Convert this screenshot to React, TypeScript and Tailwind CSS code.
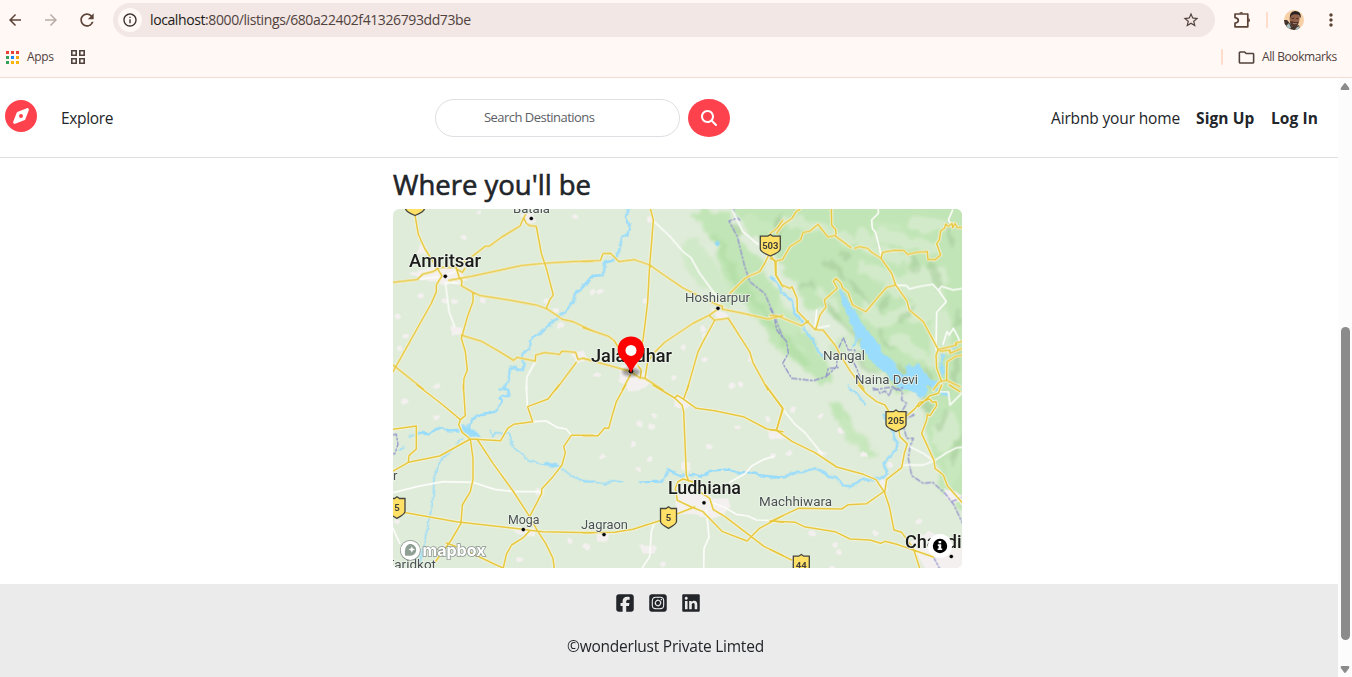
import React from "react";
import { MdArrowBack, MdArrowForward, MdRefresh, MdInfoOutline, MdStarOutline, MdMoreVert, MdOutlineFolder } from "react-icons/md";
import { FaCompass, FaMagnifyingGlass, FaSquareFacebook, FaSquareInstagram, FaLinkedin } from "react-icons/fa6";

type Tile = { x: number; y: number; roads: string[]; minor?: string[]; water?: string[]; streams?: string[]; border?: string[]; lakes?: string[] };

/* Geometry is drawn at three units per pixel, one tile for each section of the map. */
const tiles: Tile[] = [
  {
    x: 0, y: 0,
    roads: [
      "M66 30L76 88L95 130L117 165L147 212",
      "M0 232L72 224L90 207L120 200L140 187L190 187L240 152L278 123L290 123L325 97L382 62L390 42L398 28",
      "M392 38L400 55L410 62L430 64L445 145L460 190L481 270L470 285L460 310",
      "M168 226L235 214L385 182L460 174L540 170L600 168",
      "M190 190L198 215L207 228L205 242L240 262L262 272L350 285L430 300L462 312L490 330L508 343L540 350L600 378",
      "M240 262L240 290L225 330L205 400L217 440L223 495L213 520L211 555",
      "M147 212L130 240L130 260L115 295L0 500",
      "M0 480L92 553",
      "M205 390L268 410L320 440L362 466L372 457L427 468L428 450L455 443L500 448L507 438L548 442L555 463L570 460L600 467",
      "M550 472L488 555",
      "M190 192L208 202L216 190",
    ],
    minor: ["M157 232L168 320L185 365", "M427 470L402 515L400 555", "M157 215L120 217L80 222", "M157 232L200 235", "M160 210L185 200"],
    water: ["M600 212L570 245L545 270L540 290L515 322L490 340L470 360L445 380L412 402L408 430L392 445L388 465L395 478L390 495L370 493L365 485L350 492L348 520L335 545L320 552"],
  },
  {
    x: 570, y: 0,
    roads: [
      "M202 10L211 45L206 110L200 180L194 290L187 350L180 405L168 450",
      "M0 168L52 167L60 146L83 145L108 170L155 164L200 180L240 208L300 249L400 298L419 304L417 312L480 325L555 342L600 332",
      "M0 368L75 393L93 406L108 430L140 470",
      "M0 460L140 498L170 518L186 520L240 555",
      "M142 510L118 555",
      "M186 520L194 470L214 443L245 412L330 355L380 330L405 312",
      "M380 333L395 346L360 410L345 440L312 555",
      "M395 345L436 340L500 440L510 473L555 555",
      "M441 265L484 222L500 212L530 200L545 175L562 140",
      "M562 85L582 70L600 45",
      "M560 147L576 170L578 210L600 245",
      "M165 482L175 495L172 520",
    ],
    minor: ["M211 48L260 93L300 140L324 158L350 205L398 270L410 300", "M448 15L480 80L525 118"],
    water: ["M137 10L128 40L142 65L132 90L118 95L105 150L88 167L66 172L62 210L30 213L0 245"],
    border: ["M450 10L455 30L470 45L460 40L438 48L463 95L484 180L500 230L545 265L573 330L600 400"],
  },
  {
    x: 1131, y: 0,
    roads: [
      "M20 85L38 60L66 40L78 20L90 13",
      "M0 160L18 168L37 164L60 125L92 104L99 83L120 78L144 58L174 96L195 92L243 128",
      "M184 12L185 60L197 74L198 88",
      "M254 130L268 125L293 130L303 140L333 160L365 205L377 240L411 288L418 315L460 350L505 434",
      "M333 160L338 142L372 136L402 137L413 148L440 142L472 140L474 164L495 164L512 150L500 116L508 105L512 78L524 69L527 57L535 64L546 55L548 68L555 55L562 68L580 68",
      "M18 168L18 210L35 240L60 250L66 245L81 280L82 318L135 374L160 376L195 420L218 462L242 500L282 553",
      "M0 332L20 332L95 362L115 348",
      "M137 374L150 330L168 306L163 285L202 250L190 228L198 220L213 235L217 248L234 262L248 300L288 320L318 284L350 247L377 240",
      "M505 434L498 450L500 490L514 527L504 535L490 555",
      "M505 434L560 420L556 414L580 408",
      "M510 439L540 435L540 445L575 430",
      "M580 450L555 455L531 470L530 526L514 529",
      "M530 526L570 545",
    ],
    minor: [
      "M325 10L325 25L305 45L307 70L317 83L330 135L333 158",
      "M377 240L410 242L418 252L450 244L488 238L505 256L515 244L550 255L580 250",
      "M505 255L529 290L500 322L498 434",
      "M519 418L531 380L538 390L550 370L565 398L569 411",
      "M548 15L535 45L545 60",
      "M140 315L135 370L178 362",
    ],
    streams: ["M250 423L260 390L275 380L248 428", "M415 477L430 490L440 480L470 510L460 530L500 555"],
    water: ["M5 220L25 237L35 261L65 285L75 325L95 345L102 375L130 403L145 440L165 460", "M0 216L14 222"],
    lakes: [
      "M209 253L222 261L240 300L260 328L280 360L310 395L330 420L333 440L368 465L395 510L410 505L407 480L430 492L445 472L460 500L480 525L504 528L498 548L470 540L450 550L418 549L397 555L375 535L345 504L310 475L270 425L275 402L258 397L245 360L225 315L208 260Z",
      "M513 440L523 455L517 475L525 500L517 516L508 486L514 468Z",
      "M530 425L560 420L562 425L535 434Z",
    ],
    border: [
      "M0 310L12 330L20 375L50 410L55 445L38 475L65 520L130 527L168 515L175 490L205 488",
      "M168 515L200 485L203 435L220 398L235 435L255 435L245 460L260 490L282 553",
      "M310 555L370 545L380 555L405 545",
    ],
  },
  {
    x: 0, y: 540,
    roads: [
      "M72 0L150 60L202 104", "M211 0L217 92L202 104L197 120L208 143L232 162L323 167L344 130L362 118L419 110L404 65L465 42L498 0",
      "M232 162L240 220L240 283L232 320L208 360L204 415L175 465L120 540",
      "M232 162L140 213L46 232L48 212L70 192L70 123L0 133", "M46 232L0 258",
      "M252 162L300 235L360 318L410 395L433 437L458 475L480 520L484 553",
      "M30 382L190 410L390 433L410 436L450 440L600 443",
      "M410 395L446 325L446 312L480 275L507 240L517 203L512 185L535 151L600 151",
      "M160 474L205 490L310 540L340 553", "M330 553L340 508L356 480L392 457L410 437",
    ],
    minor: ["M400 0L403 65", "M419 110L460 108L492 127L520 132L535 151", "M0 323L75 304L150 290L240 292L305 313L362 320L440 320", "M0 430L20 475"],
    water: ["M335 10L347 16L345 33L327 33L320 40L328 50L308 80L250 90L225 120L238 145L255 155", "M75 143L108 145L144 126L165 136L195 135L225 142"],
    streams: ["M48 157L60 150L75 143", "M20 195L35 185", "M208 160L160 210L135 240L130 265L123 278L120 345L105 420L90 490L75 540", "M290 140L300 155L308 143L350 146L358 180L405 227L460 240L500 245L535 272L575 290L600 290"],
    lakes: ["M208 121L233 126L255 147L258 159L235 153L208 140Z", "M460 230L500 241L494 247L450 237Z"],
    border: ["M0 150L10 148L15 178L5 207L0 206"],
  },
  {
    x: 570, y: 540,
    roads: [
      "M128 0L100 50L88 90L77 130L65 129L45 152L0 152",
      "M210 0L275 39L297 60L302 80L310 270L317 288", "M275 39L283 31L298 40L340 70L395 77L481 95L552 132L600 140",
      "M317 0L303 39", "M548 0L600 72L580 136",
      "M0 443L95 442L150 433L230 407L335 366", "M330 290L300 282L285 290L277 310L283 346L325 366L360 380L417 439L492 468L528 431L600 392",
      "M330 290L335 310L380 340L391 374L425 394L543 484L600 512", "M568 408L600 412",
    ],
    minor: ["M440 292L485 267L505 244L540 224L570 215", "M380 350L425 367L460 388L495 393L520 405L600 408", "M370 375L378 457L363 490L362 553", "M215 410L205 440L200 515L175 553"],
    water: ["M170 292L235 290L257 253L285 272L318 272L340 270L350 275L388 256L440 254L475 266L500 260L525 270L600 278"],
    streams: ["M0 287L25 290L38 288L65 300L85 290L116 289"],
  },
  {
    x: 1131, y: 540,
    roads: [
      "M0 19L38 69L20 136L0 134", "M20 136L67 170L135 203L200 246L280 268L318 284L344 323L358 365L372 435L395 442L430 490L450 553",
      "M265 0L290 27L320 50L345 60L360 85", "M386 135L390 155L412 177L403 205L395 248L350 283L344 323",
      "M0 410L85 370L215 372L235 359L290 356L344 318", "M0 408L76 412L103 425L195 440L240 462L300 465L332 475L345 469L380 478L430 495L490 516",
      "M0 493L65 525", "M405 97L435 71L448 53L478 42L488 52L498 50L500 62L480 92L472 88L470 105L455 145L492 227L495 250L520 270L532 302L580 357",
      "M445 65L480 32L505 25L515 0", "M538 0L570 20",
    ],
    minor: ["M38 72L75 118L105 143L155 205", "M420 185L460 205L492 228L460 240L400 240", "M492 228L530 203L560 188L580 187", "M505 20L535 20L540 60L580 20"],
    water: ["M0 278L45 276L80 260L95 262L135 250L165 262L175 275L200 280L220 302L240 303L278 284L330 281L352 265L340 235L380 190L382 175L372 160L368 130", "M340 90L350 110"],
    streams: ["M236 0L240 12L260 23L285 60"],
    lakes: ["M397 0L410 14L440 25L450 40L470 30L475 15L465 0Z", "M495 0L510 15L530 22L535 35L512 28L490 8Z"],
    border: ["M310 10L325 15L330 25L345 18L358 32L365 10L380 10L397 20L395 45L410 55L395 80L435 90L405 100L402 130L410 160L430 160L420 185L415 220L425 272L460 295L488 292L525 325L552 360L580 420", "M545 350L580 335", "M490 515L510 553"],
  },
];

const forests = [
  "M890 20L1000 20L1025 66L1060 130L1120 200L1180 320L1280 430L1320 520L1290 540L1210 470L1130 410L1080 330L1015 270L980 200L965 120Z",
  "M990 -10L1740 -10L1740 930L1650 860L1610 700L1590 560L1510 560L1400 440L1320 330L1240 300L1180 200L1140 140L1080 80Z",
  "M1300 590L1350 600L1400 680L1450 730L1450 760L1400 740L1340 670Z",
];
const lightPatches = [
  [1340, 90, 60, 18, 25], [1470, 210, 90, 22, 20], [1570, 230, 100, 45, -12], [1300, 280, 55, 16, 50], [1520, 330, 80, 20, -25], [1600, 300, 50, 60, 30],
  [1370, 390, 16, 50, -35], [1550, 430, 65, 22, 30], [1490, 150, 65, 20, 25], [1240, 55, 75, 14, 10], [1640, 410, 30, 90, 10], [1660, 680, 35, 60, 15], [1420, 110, 25, 40, -30],
  [1600, 60, 60, 26, 0], [1500, 100, 70, 20, 10], [1440, 330, 22, 50, -35], [1580, 120, 60, 22, 10],
];
const ridges = [
  [1325, 190, 10, 50, -38], [1405, 260, 10, 60, -35], [1320, 320, 8, 40, -42], [1370, 380, 9, 60, -45], [1420, 475, 10, 50, -45],
  [1160, 60, 12, 30, 20], [1240, 240, 8, 36, 55], [1545, 330, 9, 40, 42], [1665, 90, 11, 44, -20], [1560, 180, 9, 26, -30], [1625, 210, 10, 46, -12],
  [1475, 300, 8, 30, 25], [1610, 515, 11, 30, -20], [1690, 490, 12, 55, 10], [1600, 600, 16, 30, -35], [1650, 650, 12, 35, 20], [1690, 730, 10, 50, 15],
  [1030, 70, 10, 24, -35], [1480, 400, 7, 40, -35], [1540, 500, 12, 30, -45], [1690, 340, 7, 30, 15], [1355, 150, 7, 22, -30],
];
const softPatches = [
  [925, 180, 40, 90, -28], [1000, 260, 36, 45, -20], [1100, 60, 50, 22, 20], [1180, 340, 30, 60, -30], [1200, 440, 40, 24, 30], [1340, 430, 20, 30, 30], [1480, 65, 50, 14, 5], [1680, 790, 25, 60, 10], [1390, 700, 22, 75, -38],
];
const towns = [
  "M80 120l20 5l-5 25l-20-5ZM45 205L100 190L190 185L225 225L160 240L90 222ZM172 362L207 365L208 388L175 390ZM535 445L575 435L585 465L550 475ZM380 30L420 20L430 55L395 55Z",
  "M680 485L730 480L760 510L775 535L745 555L710 560L680 530ZM955 310L1000 325L1010 335L970 345ZM843 570L885 580L895 600L870 615L845 600ZM1120 670L1160 680L1180 700L1135 705ZM865 770L895 770L890 795L865 795Z",
  "M848 840L920 850L960 880L1005 880L1015 900L990 930L960 940L900 930L850 920ZM360 965L430 970L425 995L370 990ZM1275 735L1305 745L1290 755L1272 750ZM1455 820L1480 825L1485 860L1462 855ZM735 1020L790 1025L785 1045L750 1045Z",
  "M1550 1010L1610 980L1710 1030L1710 1100L1600 1100ZM1650 850L1710 870L1710 900L1660 880ZM610 980L650 980L645 1010L612 1010ZM428 850L450 850L450 870L430 870Z",
];
const hamlets = [
  [255, 20], [210, 96], [545, 32], [80, 270], [155, 286], [182, 287], [14, 332], [34, 390], [19, 428], [267, 283], [460, 286], [485, 312], [500, 358], [130, 540],
  [597, 260], [620, 258], [753, 286], [768, 40], [928, 370], [870, 425], [933, 462], [1042, 535], [1070, 460], [610, 508], [935, 388], [840, 516], [1015, 540],
  [32, 586], [127, 635], [380, 1060], [530, 1005], [575, 1020], [10, 948], [784, 630], [737, 656], [775, 663], [718, 715], [626, 755], [768, 760], [736, 792], [946, 720], [1030, 666], [1123, 642], [1140, 750],
  [1198, 613], [1281, 632], [1340, 676], [1140, 752], [1187, 743], [1410, 748], [1255, 982], [1325, 1018], [1336, 1040], [1445, 980], [1577, 946], [1315, 1088], [807, 1075], [580, 1023], [1490, 778], [1200, 1060],
];

type LabelProps = { x: number; y: number; w?: number; size: number; bold?: boolean; children: string };
function Label({ x, y, w, size, bold, children }: LabelProps) {
  return (
    <text x={x} y={y} textLength={w} lengthAdjust="spacingAndGlyphs" fontSize={size} fontWeight={bold ? 500 : 400} fill={bold ? "#1b1b1b" : "#4c5153"} stroke="#edf4ea" strokeWidth={bold ? 1.8 : 1.6} strokeLinejoin="round" paintOrder="stroke" style={{ fontFamily: "Roboto, sans-serif" }}>
      {children}
    </text>
  );
}

function Shield({ x, y, w, children }: { x: number; y: number; w: number; children?: string }) {
  const h = w / 2;
  return (
    <g transform={`translate(${x} ${y})`}>
      <path d={`M0 -10.5L2.5 -8.8L${h} -8.8V4Q${h} 7 0 11Q${-h} 7 ${-h} 4V-8.8L-2.5 -8.8Z`} fill="#ffe168" stroke="#45453d" strokeWidth="1.3" />
      {children && <text y="3.5" textAnchor="middle" fontSize="9.5" fontWeight="700" fill="#44413a" style={{ fontFamily: "Roboto, sans-serif" }}>{children}</text>}
    </g>
  );
}

function Layer({ pick, ...rest }: { pick: "roads" | "minor" | "water" | "streams" | "border" | "lakes" } & React.SVGProps<SVGGElement>) {
  return (
    <g fill="none" strokeLinejoin="round" strokeLinecap="round" {...rest}>
      {tiles.map((t, i) => <path key={i} transform={`translate(${t.x} ${t.y})`} d={(t[pick] ?? []).join("")} />)}
    </g>
  );
}

function CityMap() {
  const blob = ([cx, cy, rx, ry, a]: number[], i: number) => <ellipse key={i} cx={cx} cy={cy} rx={rx} ry={ry} transform={`rotate(${a} ${cx} ${cy})`} />;
  return (
    <svg viewBox="393 209 569 359" className="block h-[359px] w-[569px] rounded-md bg-[#dfecd9]">
      <defs>
        <filter id="terrain" x="-10%" y="-10%" width="120%" height="120%">
          <feTurbulence type="fractalNoise" baseFrequency="0.022" numOctaves="3" seed="4" />
          <feDisplacementMap in="SourceGraphic" scale="46" xChannelSelector="R" yChannelSelector="G" />
          <feGaussianBlur stdDeviation="4" />
        </filter>
        <filter id="edge" x="-10%" y="-10%" width="120%" height="120%">
          <feTurbulence type="fractalNoise" baseFrequency="0.05" numOctaves="2" seed="8" />
          <feDisplacementMap in="SourceGraphic" scale="13" xChannelSelector="R" yChannelSelector="G" />
        </filter>
        <filter id="shadow"><feGaussianBlur stdDeviation="1.6" /></filter>
      </defs>
      <g transform="translate(393 205) scale(.333333)">
        <g filter="url(#terrain)">
          <g fill="#c1e5b6">{forests.map((d) => <path key={d} d={d} />)}</g>
          <g fill="#cbe8c1" opacity=".7">{softPatches.map(blob)}</g>
          <g fill="#d3eaca">{lightPatches.map(blob)}</g>
          <g fill="#a4ca98" opacity=".55">{ridges.map(blob)}</g>
          <path d="M960 90L1000 160L1050 250L1120 330L1170 400L1240 480" fill="none" stroke="#b6e0aa" strokeWidth="24" />
        </g>
        <g fill="#f3f0ef" filter="url(#edge)">
          {towns.map((d) => <path key={d} d={d} />)}
          {hamlets.map(([x, y], i) => <ellipse key={i} cx={x + 2} cy={y + 2} rx={9} ry={8} />)}
        </g>
        <Layer pick="lakes" style={{ fill: "#9adcfb" }} filter="url(#edge)" />
        <Layer pick="water" stroke="#9adcfb" strokeWidth="7" filter="url(#edge)" />
        <Layer pick="streams" stroke="#9adcfb" strokeWidth="4.5" filter="url(#edge)" />
        <path d="M965 112l12-6l3 14l-10 4Z" fill="#8fd8f8" />
        <Layer pick="border" stroke="#9597cc" strokeWidth="4.2" strokeDasharray="15 7 5 7" />
        <Layer pick="minor" stroke="#fbfcf9" strokeWidth="5" />
        <Layer pick="roads" stroke="#f5f4dc" strokeWidth="9" />
        <Layer pick="roads" stroke="#e7c83e" strokeWidth="4.5" />
      </g>
      <Label x={409} y={267} w={72} size={18} bold>Amritsar</Label>
      <Label x={513} y={213} w={37} size={12.8}>Batala</Label>
      <Label x={685} y={302} w={65} size={13.3}>Hoshiarpur</Label>
      <Label x={591} y={362} w={81} size={18} bold>Jalandhar</Label>
      <Label x={823} y={359.7} w={42} size={13.3}>Nangal</Label>
      <Label x={855} y={383.5} w={63} size={13.3}>Naina Devi</Label>
      <Label x={668} y={493.5} w={73} size={18} bold>Ludhiana</Label>
      <Label x={759} y={506} w={73} size={13.3}>Machhiwara</Label>
      <Label x={508} y={523.5} w={31.5} size={13.3}>Moga</Label>
      <Label x={581} y={529} w={47} size={13.3}>Jagraon</Label>
      <Label x={387} y={569.3} w={49} size={13.3}>Faridkot</Label>
      <Label x={393} y={479.5} size={13.3}>r</Label>
      <Label x={905} y={547.5} w={93} size={18} bold>Chandigarh</Label>
      <g fill="#000">
        {[[445.3, 276.3], [531.3, 218.5], [718, 308.3], [704, 502.8], [604, 534.6], [523.3, 529.6], [951.3, 556.5]].map(([x, y]) => <circle key={x} cx={x} cy={y} r="2.1" stroke="#fff" strokeWidth=".5" />)}
      </g>
      <Shield x={770.3} y={245} w={20}>503</Shield>
      <Shield x={896} y={420.5} w={20}>205</Shield>
      <Shield x={668.5} y={517.3} w={16}>5</Shield>
      <Shield x={397} y={507.3} w={16}>5</Shield>
      <Shield x={801.3} y={565} w={16}>44</Shield>
      <Shield x={415} y={204.5} w={19} />

      <ellipse cx="631" cy="372" rx="9" ry="4.2" fill="#000" opacity=".35" filter="url(#shadow)" />
      <circle cx="631" cy="371.2" r="2.4" fill="#111" />
      <path d="M631 373C628.5 367 625.5 363 621.5 359C614.5 352 617 337 631 336.4C645 337 647.5 352 640.5 359C636.5 363 633.5 367 631 373Z" fill="#fe0000" />
      <circle cx="631" cy="350.4" r="5.5" fill="#fff" />

      <circle cx="940" cy="546" r="12" fill="#fff" />
      <circle cx="940" cy="546" r="7.2" fill="#000" />
      <path d="M938.6 541h2.6v2.2h-2.6ZM937.8 544.3h3.4v4.2h1v1.6h-4.6v-1.6h1v-2.6h-.8Z" fill="#fff" />

      <g stroke="#8c9590" strokeWidth="1.6" fill="#fff" paintOrder="stroke">
        <circle cx="410.3" cy="550.3" r="9.6" />
        <text x="422.5" y="555.5" textLength="63" fontSize="16.5" fontWeight="700" lengthAdjust="spacingAndGlyphs" style={{ fontFamily: "Inter, sans-serif" }}>mapbox</text>
      </g>
      <path d="M405 555.5C404 545 409 543.5 412 544.3C416.5 545.8 417.5 551 414.5 554C412 556.3 408 556 405 555.5Z" fill="#8f9f94" />
      <path d="M411.8 546.2l1 2.3l2.3 1l-2.3 1l-1 2.3l-1-2.3l-2.3-1l2.3-1Z" fill="#fff" />
    </svg>
  );
}

function AppsGrid() {
  const colors = ["#ea4335", "#ea4335", "#ea4335", "#34a058", "#1a85f5", "#f4a70b", "#34a058", "#fbb40a", "#fbb40a"];
  return (
    <svg viewBox="0 0 13 13" className="size-[13px]">
      {colors.map((c, i) => <rect key={i} x={(i % 3) * 5} y={Math.floor(i / 3) * 5} width="3" height="3" fill={c} />)}
    </svg>
  );
}

function Avatar() {
  return (
    <svg viewBox="0 0 20 20" className="size-5 overflow-hidden rounded-full">
      <rect width="20" height="20" fill="#f7cfa4" />
      <path d="M0 10L3 10L9 17L15 15L16 20H0Z" fill="#40322d" />
      <path d="M2 16l3-3l2 5l-3 2ZM12 18l3-2v4h-4Z" fill="#a9bfc2" />
      <path d="M5.5 8Q6 3 11.5 3.5Q16 4 15.6 9Q15 16 10.5 17Q5.5 14 5.5 8Z" fill="#94624a" />
      <path d="M6 8Q5 2 11 1Q17 1 16.8 7L16 8L15 5Q10 3.2 7.5 5.6Z" fill="#2b2321" />
      <path d="M7.5 8.3h2.6M12.2 8.5h2.2" stroke="#3f2a22" strokeWidth=".9" fill="none" />
      <path d="M5.8 11.5Q8 11 10.8 12Q13 12 14.6 12L12.8 16.5L10 17.5Q6.5 15.5 5.8 11.5Z" fill="#4f352b" />
      <path d="M8.8 13.3Q11 14.2 12.8 13.4" stroke="#c39a88" strokeWidth=".8" fill="none" />
    </svg>
  );
}

function BrowserBar() {
  return (
    <header className="flex h-[78px] flex-col border-b border-[#efdcd5] bg-[#fff8f5] text-[#51423d]">
      <div className="flex h-10 items-center">
        <MdArrowBack className="ml-[6px] size-[18px] text-[#5c4337]" />
        <MdArrowForward className="ml-[18px] size-[18px] text-[#b9ada7]" />
        <MdRefresh className="ml-[17px] size-[20px] text-[#5c4337]" />
        <div className="ml-4 flex h-[34px] w-[1102px] items-center rounded-full bg-[#f2e7e4] pl-[5px] pr-[15px]">
          <div className="flex size-6 items-center justify-center rounded-full bg-[#fff8f5]"><MdInfoOutline className="size-4 text-[#382f2c]" /></div>
          <span className="ml-2 w-[322px] whitespace-nowrap text-[14px] leading-5 tracking-[-0.4px]"><span className="text-[#211a18]">localhost</span>:8000/listings/680a22402f41326793dd73be</span>
          <MdStarOutline className="ml-auto size-[18px] text-[#51423d]" />
        </div>
        <svg viewBox="0 0 18 18" className="ml-[18px] size-[18px]" fill="none" stroke="#5c4337" strokeWidth="1.7" strokeLinejoin="round">
          <path d="M2 3H14.8V15.8H2V12.2Q5.3 11.5 5.3 9.4T2 6.6Z" />
          <path d="M6.2 2.6Q6.2 .9 8.2 .9T10.2 2.6ZM15.2 7.2Q17 7.2 17 9.2T15.2 11.2Z" fill="#5c4337" stroke="none" />
        </svg>
        <span className="ml-[15px] h-4 w-[2px] rounded bg-[#ffdccb]" />
        <span className="ml-4"><Avatar /></span>
        <MdMoreVert className="ml-[17px] size-5 text-[#5c4337]" />
      </div>
      <div className="flex h-[37px] items-center pb-[3px] text-[12px]">
        <span className="ml-[6px]"><AppsGrid /></span>
        <span className="ml-2 w-[28px] tracking-[-0.35px]">Apps</span>
        <svg viewBox="0 0 14 14" className="ml-4 size-[14px]" fill="none" stroke="#51423d" strokeWidth="1.6"><path d="M.8.8h4.4v4.4H.8ZM8.8.8h4.4v4.4H8.8ZM.8 8.8h4.4v4.4H.8ZM8.8 8.8h4.4v4.4H8.8Z" /></svg>
        <span className="ml-auto h-4 w-[2px] rounded bg-[#ffdccb]" />
        <MdOutlineFolder className="ml-[14px] size-[19px]" />
        <span className="ml-[6px] mr-[13px] w-[77px] whitespace-nowrap tracking-[-0.4px]">All Bookmarks</span>
      </div>
    </header>
  );
}

function Navbar() {
  return (
    <nav className="flex h-20 items-center border-b border-[#dee0e3] bg-white text-[15.5px] text-[#222529]">
      <FaCompass className="mb-1 ml-[5px] size-8 text-[#fe424d]" />
      <a className="ml-6 w-[52px] pt-0.5 tracking-[-0.35px]">Explore</a>
      <div className="ml-[322px] flex h-[38px] w-[245px] items-center rounded-full border border-[#dddfe2] pl-12 pt-px text-[13px] tracking-[-0.53px] text-[#5c6065]">Search Destinations</div>
      <button className="ml-2 flex h-[38px] w-[42px] items-center justify-center rounded-[50%] bg-[#fe424d] text-white"><FaMagnifyingGlass className="size-4" /></button>
      <div className="ml-auto mr-5 flex whitespace-nowrap pt-0.5">
        <a className="w-[129px] tracking-[-0.15px]">Airbnb your home</a>
        <a className="ml-4 w-[59px] font-bold tracking-[0.1px]">Sign Up</a>
        <a className="ml-4 w-[47px] font-bold tracking-[0.1px]">Log In</a>
      </div>
    </nav>
  );
}

export default function App() {
  return (
    <div className="flex h-[677px] w-[1352px] flex-col overflow-hidden bg-white" style={{ fontFamily: '"Open Sans", "Noto Sans", sans-serif' }}>
      <BrowserBar />
      <div className="flex min-h-0 flex-1">
        <div className="flex w-[1338px] flex-col">
          <Navbar />
          <main className="flex h-[426px] flex-col pl-[393px] pt-[10px]">
            <h3 className="mb-[7px] h-[34px] text-[27.5px] leading-[34px] tracking-[0px] text-[#212529] [-webkit-text-stroke:0.6px_#212529]">Where you'll be</h3>
            <CityMap />
          </main>
          <footer className="flex flex-1 flex-col bg-[#ebebeb] text-[#222529]">
            <div className="mt-[9px] flex h-5 items-center gap-[13px] pl-[614.5px]">
              <FaSquareFacebook className="size-5" />
              <FaSquareInstagram className="size-5" />
              <FaLinkedin className="size-5" />
            </div>
            <p className="ml-[567px] mt-[21px] w-[197px] whitespace-nowrap text-[15.5px] leading-6 tracking-[-0.23px]">©wonderlust Private Limted</p>
          </footer>
        </div>
        <aside className="flex w-[14px] flex-col items-center bg-[#fcfcfc] pt-[5px]">
          <svg viewBox="0 0 10 7" className="h-[7px] w-[10px]"><path d="M5 0Q5.6 0 6 .7L9.2 5Q9.8 7 8.4 7H1.6Q.2 7 .8 5L4 .7Q4.4 0 5 0Z" fill="#8b8b8b" /></svg>
          <div className="mt-[237px] h-[313px] w-[9px] rounded-full bg-[#8b8b8b]" />
          <svg viewBox="0 0 10 7" className="mt-[26px] h-[7px] w-[10px]"><path d="M5 7Q5.6 7 6 6.3L9.2 2Q9.8 0 8.4 0H1.6Q.2 0 .8 2L4 6.3Q4.4 7 5 7Z" fill="#8b8b8b" /></svg>
        </aside>
      </div>
    </div>
  );
}
